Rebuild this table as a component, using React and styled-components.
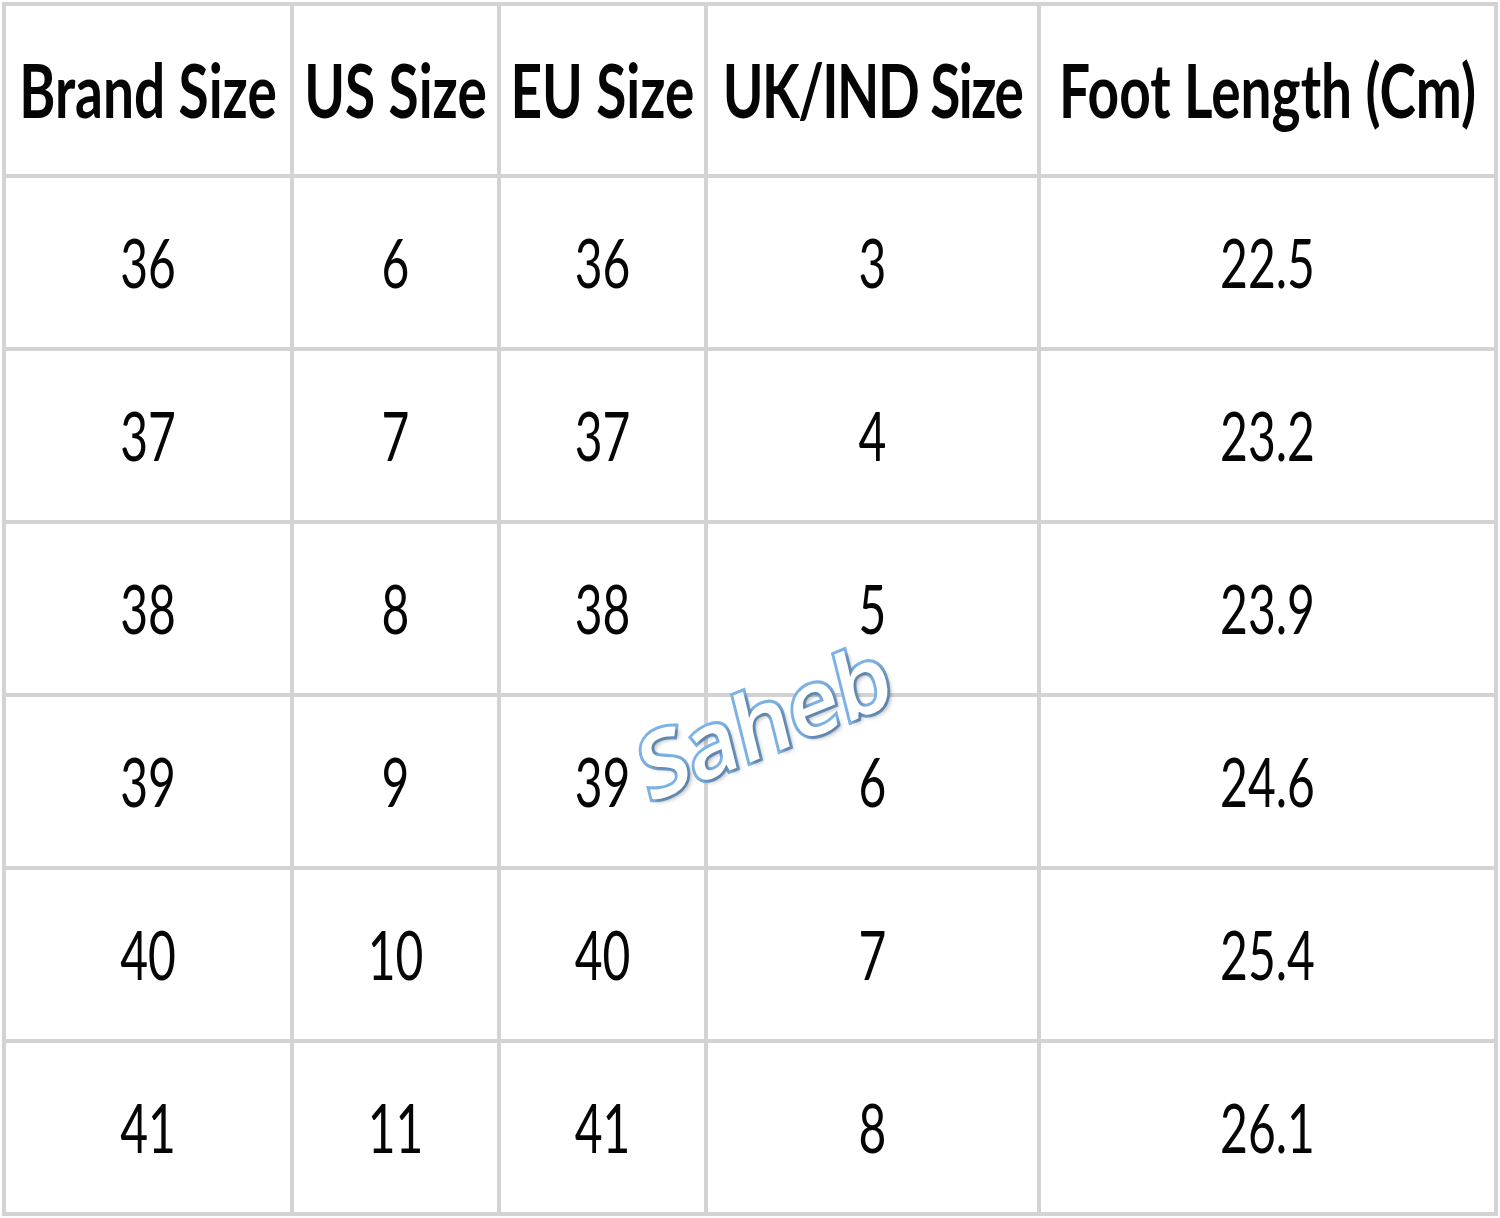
import React from "react";
import styled, { createGlobalStyle } from "styled-components";

const Global = createGlobalStyle`
  html, body { margin: 0; padding: 0; background: #ffffff; }
  body { width: 1500px; height: 1218px; overflow: hidden; }
`;

const Frame = styled.div`
  position: relative;
  margin: 2px 0 0 2px;
  width: 1496px;
`;

const Grid = styled.div`
  display: grid;
  grid-template-columns: 284px 203px 203px 329px 453px;
  grid-template-rows: 168px repeat(6, 169px);
  gap: 4px;
  padding: 4px;
  background: #d3d3d3;
  box-sizing: border-box;
  width: 1496px;
`;

const Cell = styled.div`
  background: #ffffff;
  display: flex;
  align-items: center;
  justify-content: center;
  overflow: visible;
  white-space: nowrap;
  font-family: Lato, "Open Sans", sans-serif;
  color: #050505;
  font-weight: ${(p) => (p.$head ? 700 : 400)};
  font-size: ${(p) => (p.$head ? "55px" : "48px")};
  line-height: 1;
`;

const Stretch = styled.span`
  display: inline-block;
  transform: scaleY(${(p) => p.$k});
  letter-spacing: ${(p) => p.$ls || "0px"};
`;

const Watermark = styled.div`
  position: absolute;
  left: 762px;
  top: 717px;
  transform: translate(-50%, -50%) rotate(-22deg) skewX(-8deg);
  font-family: "Open Sans", Lato, sans-serif;
  font-style: normal;
  font-weight: 600;
  font-size: 90px;
  line-height: 1;
  color: #ffffff;
  -webkit-text-stroke: 6px #7db2e6;
  paint-order: stroke fill;
  text-shadow: 3px 4px 4px rgba(0, 0, 0, 0.28);
  white-space: nowrap;
  pointer-events: none;
`;

const headers = ["Brand Size", "US Size", "EU Size", "UK/IND Size", "Foot Length (Cm)"];
const rows = [
  ["36", "6", "36", "3", "22.5"],
  ["37", "7", "37", "4", "23.2"],
  ["38", "8", "38", "5", "23.9"],
  ["39", "9", "39", "6", "24.6"],
  ["40", "10", "40", "7", "25.4"],
  ["41", "11", "41", "8", "26.1"],
];

export default function App() {
  return (
    <>
      <Global />
      <Frame>
        <Grid>
          {headers.map((h) => (
            <Cell key={h} $head>
              <Stretch $k={1.35} $ls={h === "UK/IND Size" ? "-1.5px" : "0px"}>{h}</Stretch>
            </Cell>
          ))}
          {rows.map((r, i) =>
            r.map((v, j) => (
              <Cell key={i + "-" + j}>
                <Stretch $k={1.4}>{v}</Stretch>
              </Cell>
            ))
          )}
        </Grid>
        <Watermark>Saheb</Watermark>
      </Frame>
    </>
  );
}
